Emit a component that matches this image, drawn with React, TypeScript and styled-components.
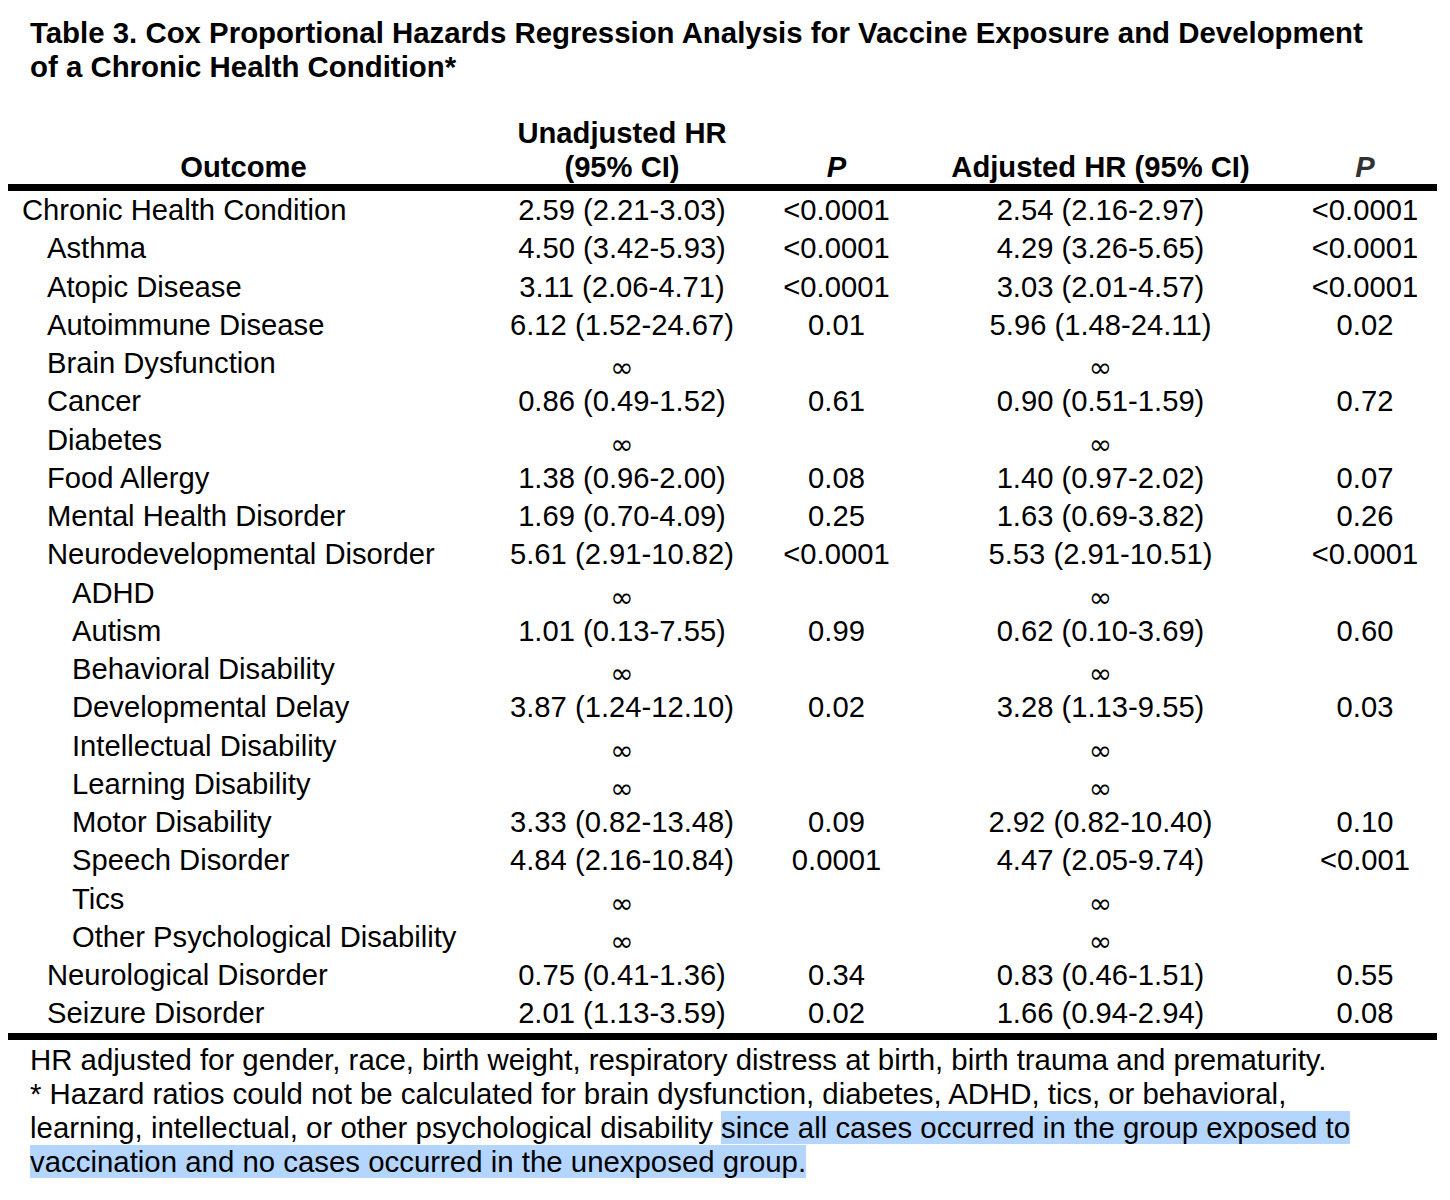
import React from "react";
import styled, { createGlobalStyle } from "styled-components";

const GlobalStyle = createGlobalStyle`
  html, body {
    margin: 0;
    padding: 0;
    background: #ffffff;
  }
  body {
    font-family: "Liberation Sans", Arial, sans-serif;
    color: #000000;
  }
`;

const Page = styled.div`
  padding: 16px 13px 20px 8px;
  width: 1429px;
`;

const Title = styled.h1`
  margin: 0 0 32px 0;
  padding-left: 22px;
  font-size: 29.4px;
  line-height: 34px;
  font-weight: 700;
`;

const Table = styled.table`
  width: 1429px;
  table-layout: fixed;
  border-collapse: collapse;
  font-size: 29.2px;
`;

const HeadCell = styled.th<{ $gray?: boolean; $italic?: boolean }>`
  font-weight: 700;
  font-style: ${(p) => (p.$italic ? "italic" : "normal")};
  color: ${(p) => (p.$gray ? "#333333" : "#000000")};
  line-height: 34px;
  text-align: center;
  vertical-align: bottom;
  padding: 0 10px 0 0;
  border-bottom: 7px solid #000000;
`;

const LabelCell = styled.td<{ $level: number }>`
  height: 38.25px;
  line-height: 38.25px;
  padding: 0 0 0 ${(p) => 14 + p.$level * 25}px;
  white-space: nowrap;
  vertical-align: middle;
`;

const ValueCell = styled.td`
  height: 38.25px;
  line-height: 38.25px;
  padding: 0 10px 0 0;
  text-align: center;
  white-space: nowrap;
  vertical-align: middle;
`;

const Body = styled.tbody`
  tr:last-child td {
    border-bottom: 7px solid #000000;
  }
`;

const Inf = styled.span`
  font-family: "DejaVu Sans", sans-serif;
  font-size: 28px;
  line-height: 0;
  vertical-align: -4px;
`;

const Notes = styled.div`
  padding: 3px 0 0 22px;
  font-size: 29.4px;
  line-height: 34px;
`;

const Highlight = styled.span`
  background: #b4d5fe;
`;

type Row = {
  label: string;
  level: number;
  u?: string;
  up?: string;
  a?: string;
  ap?: string;
};

const rows: Row[] = [
  { label: "Chronic Health Condition", level: 0, u: "2.59 (2.21-3.03)", up: "<0.0001", a: "2.54 (2.16-2.97)", ap: "<0.0001" },
  { label: "Asthma", level: 1, u: "4.50 (3.42-5.93)", up: "<0.0001", a: "4.29 (3.26-5.65)", ap: "<0.0001" },
  { label: "Atopic Disease", level: 1, u: "3.11 (2.06-4.71)", up: "<0.0001", a: "3.03 (2.01-4.57)", ap: "<0.0001" },
  { label: "Autoimmune Disease", level: 1, u: "6.12 (1.52-24.67)", up: "0.01", a: "5.96 (1.48-24.11)", ap: "0.02" },
  { label: "Brain Dysfunction", level: 1 },
  { label: "Cancer", level: 1, u: "0.86 (0.49-1.52)", up: "0.61", a: "0.90 (0.51-1.59)", ap: "0.72" },
  { label: "Diabetes", level: 1 },
  { label: "Food Allergy", level: 1, u: "1.38 (0.96-2.00)", up: "0.08", a: "1.40 (0.97-2.02)", ap: "0.07" },
  { label: "Mental Health Disorder", level: 1, u: "1.69 (0.70-4.09)", up: "0.25", a: "1.63 (0.69-3.82)", ap: "0.26" },
  { label: "Neurodevelopmental Disorder", level: 1, u: "5.61 (2.91-10.82)", up: "<0.0001", a: "5.53 (2.91-10.51)", ap: "<0.0001" },
  { label: "ADHD", level: 2 },
  { label: "Autism", level: 2, u: "1.01 (0.13-7.55)", up: "0.99", a: "0.62 (0.10-3.69)", ap: "0.60" },
  { label: "Behavioral Disability", level: 2 },
  { label: "Developmental Delay", level: 2, u: "3.87 (1.24-12.10)", up: "0.02", a: "3.28 (1.13-9.55)", ap: "0.03" },
  { label: "Intellectual Disability", level: 2 },
  { label: "Learning Disability", level: 2 },
  { label: "Motor Disability", level: 2, u: "3.33 (0.82-13.48)", up: "0.09", a: "2.92 (0.82-10.40)", ap: "0.10" },
  { label: "Speech Disorder", level: 2, u: "4.84 (2.16-10.84)", up: "0.0001", a: "4.47 (2.05-9.74)", ap: "<0.001" },
  { label: "Tics", level: 2 },
  { label: "Other Psychological Disability", level: 2 },
  { label: "Neurological Disorder", level: 1, u: "0.75 (0.41-1.36)", up: "0.34", a: "0.83 (0.46-1.51)", ap: "0.55" },
  { label: "Seizure Disorder", level: 1, u: "2.01 (1.13-3.59)", up: "0.02", a: "1.66 (0.94-2.94)", ap: "0.08" },
];

function Hr({ value }: { value?: string }) {
  return value ? <>{value}</> : <Inf>∞</Inf>;
}

export default function App() {
  return (
    <Page>
      <GlobalStyle />
      <Title>
        Table 3. Cox Proportional Hazards Regression Analysis for Vaccine Exposure and Development
        <br />
        of a Chronic Health Condition*
      </Title>
      <Table>
        <colgroup>
          <col style={{ width: 471 }} />
          <col style={{ width: 296 }} />
          <col style={{ width: 133 }} />
          <col style={{ width: 395 }} />
          <col style={{ width: 134 }} />
        </colgroup>
        <thead>
          <tr>
            <HeadCell style={{ paddingRight: 0 }}>Outcome</HeadCell>
            <HeadCell>
              Unadjusted HR
              <br />
              (95% CI)
            </HeadCell>
            <HeadCell $italic>P</HeadCell>
            <HeadCell>Adjusted HR (95% CI)</HeadCell>
            <HeadCell $italic $gray>P</HeadCell>
          </tr>
        </thead>
        <Body>
          {rows.map((r) => (
            <tr key={r.label}>
              <LabelCell $level={r.level}>{r.label}</LabelCell>
              <ValueCell>
                <Hr value={r.u} />
              </ValueCell>
              <ValueCell>{r.up ?? ""}</ValueCell>
              <ValueCell>
                <Hr value={r.a} />
              </ValueCell>
              <ValueCell>{r.ap ?? ""}</ValueCell>
            </tr>
          ))}
        </Body>
      </Table>
      <Notes>
        HR adjusted for gender, race, birth weight, respiratory distress at birth, birth trauma and prematurity.
        <br />
        * Hazard ratios could not be calculated for brain dysfunction, diabetes, ADHD, tics, or behavioral,
        <br />
        learning, intellectual, or other psychological disability{" "}
        <Highlight>
          since all cases occurred in the group exposed to
          <br />
          vaccination and no cases occurred in the unexposed group.
        </Highlight>
      </Notes>
    </Page>
  );
}
